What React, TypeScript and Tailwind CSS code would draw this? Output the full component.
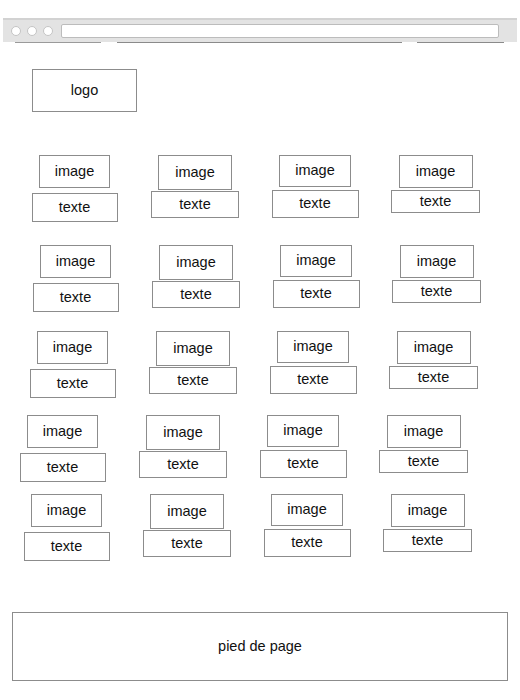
import React from "react";

type Col = {
    cell: string
    image: string
    gap: string
    texte: string
}

// each column of the sketch has slightly different box sizes
const cols: Col[] = [
    { cell: "w-[121px]", image: "w-[71px] h-[33px]", gap: "mt-[5px]", texte: "w-[86px] h-[29px]" },
    { cell: "w-[120px]", image: "w-[74px] h-[35px]", gap: "mt-[1px]", texte: "w-[88px] h-[27px]" },
    { cell: "w-[120px]", image: "w-[72px] h-[32px]", gap: "mt-[3px]", texte: "w-[87px] h-[28px]" },
    { cell: "w-[121px]", image: "w-[74px] h-[33px]", gap: "mt-[2px]", texte: "w-[89px] h-[23px]" },
]

const rows = [
    "h-[90px] pl-[14px]",
    "h-[86px] pl-[15px]",
    "h-[84px] pl-[12px]",
    "h-[79px] pl-[2px]",
    "h-[118px] pl-[6px]",
]

const box = "border border-[#8c8c8c] flex items-center justify-center"

function BrowserBar() {
    return (
        <div className="pt-[18px] px-[3px]">
            <div className="h-[24px] bg-[#e3e3e3] border-t-2 border-[#d2d2d2] flex items-center pl-[8px] pr-[18px]">
                <div className="flex gap-[6px]">
                    <div className="w-[10px] h-[10px] rounded-full bg-white border border-[#c4c4c4]" />
                    <div className="w-[10px] h-[10px] rounded-full bg-white border border-[#c4c4c4]" />
                    <div className="w-[10px] h-[10px] rounded-full bg-white border border-[#c4c4c4]" />
                </div>
                <div className="ml-[8px] flex-1 h-[14px] bg-white border border-[#bcbcbc] rounded-[2px]" />
            </div>
            <div className="flex h-[1px]">
                <div className="ml-[12px] w-[86px] bg-[#9a9a9a]" />
                <div className="ml-[16px] w-[285px] bg-[#8a8a8a]" />
                <div className="ml-[15px] w-[87px] bg-[#8a8a8a]" />
            </div>
        </div>
    )
}

export default function App() {
    return (
        <div className="w-[520px] h-[700px] bg-white overflow-hidden text-[14.5px] text-[#111] font-['Liberation_Sans',Arial,sans-serif]">
            <BrowserBar />

            <div className={`ml-[32px] mt-[26px] w-[105px] h-[43px] ${box}`}>
                logo
            </div>

            <div className="mt-[43px] flex flex-col">
                {rows.map((row, r) => (
                    <div key={r} className={`flex ${row}`}>
                        {cols.map((col, c) => (
                            <div key={c} className={`flex flex-col items-center ${col.cell}`}>
                                <div className={`${box} ${col.image}`}>image</div>
                                <div className={`${box} ${col.texte} ${col.gap}`}>texte</div>
                            </div>
                        ))}
                    </div>
                ))}
            </div>

            <div className={`ml-[12px] w-[496px] h-[69px] ${box}`}>
                pied de page
            </div>
        </div>
    )
}
